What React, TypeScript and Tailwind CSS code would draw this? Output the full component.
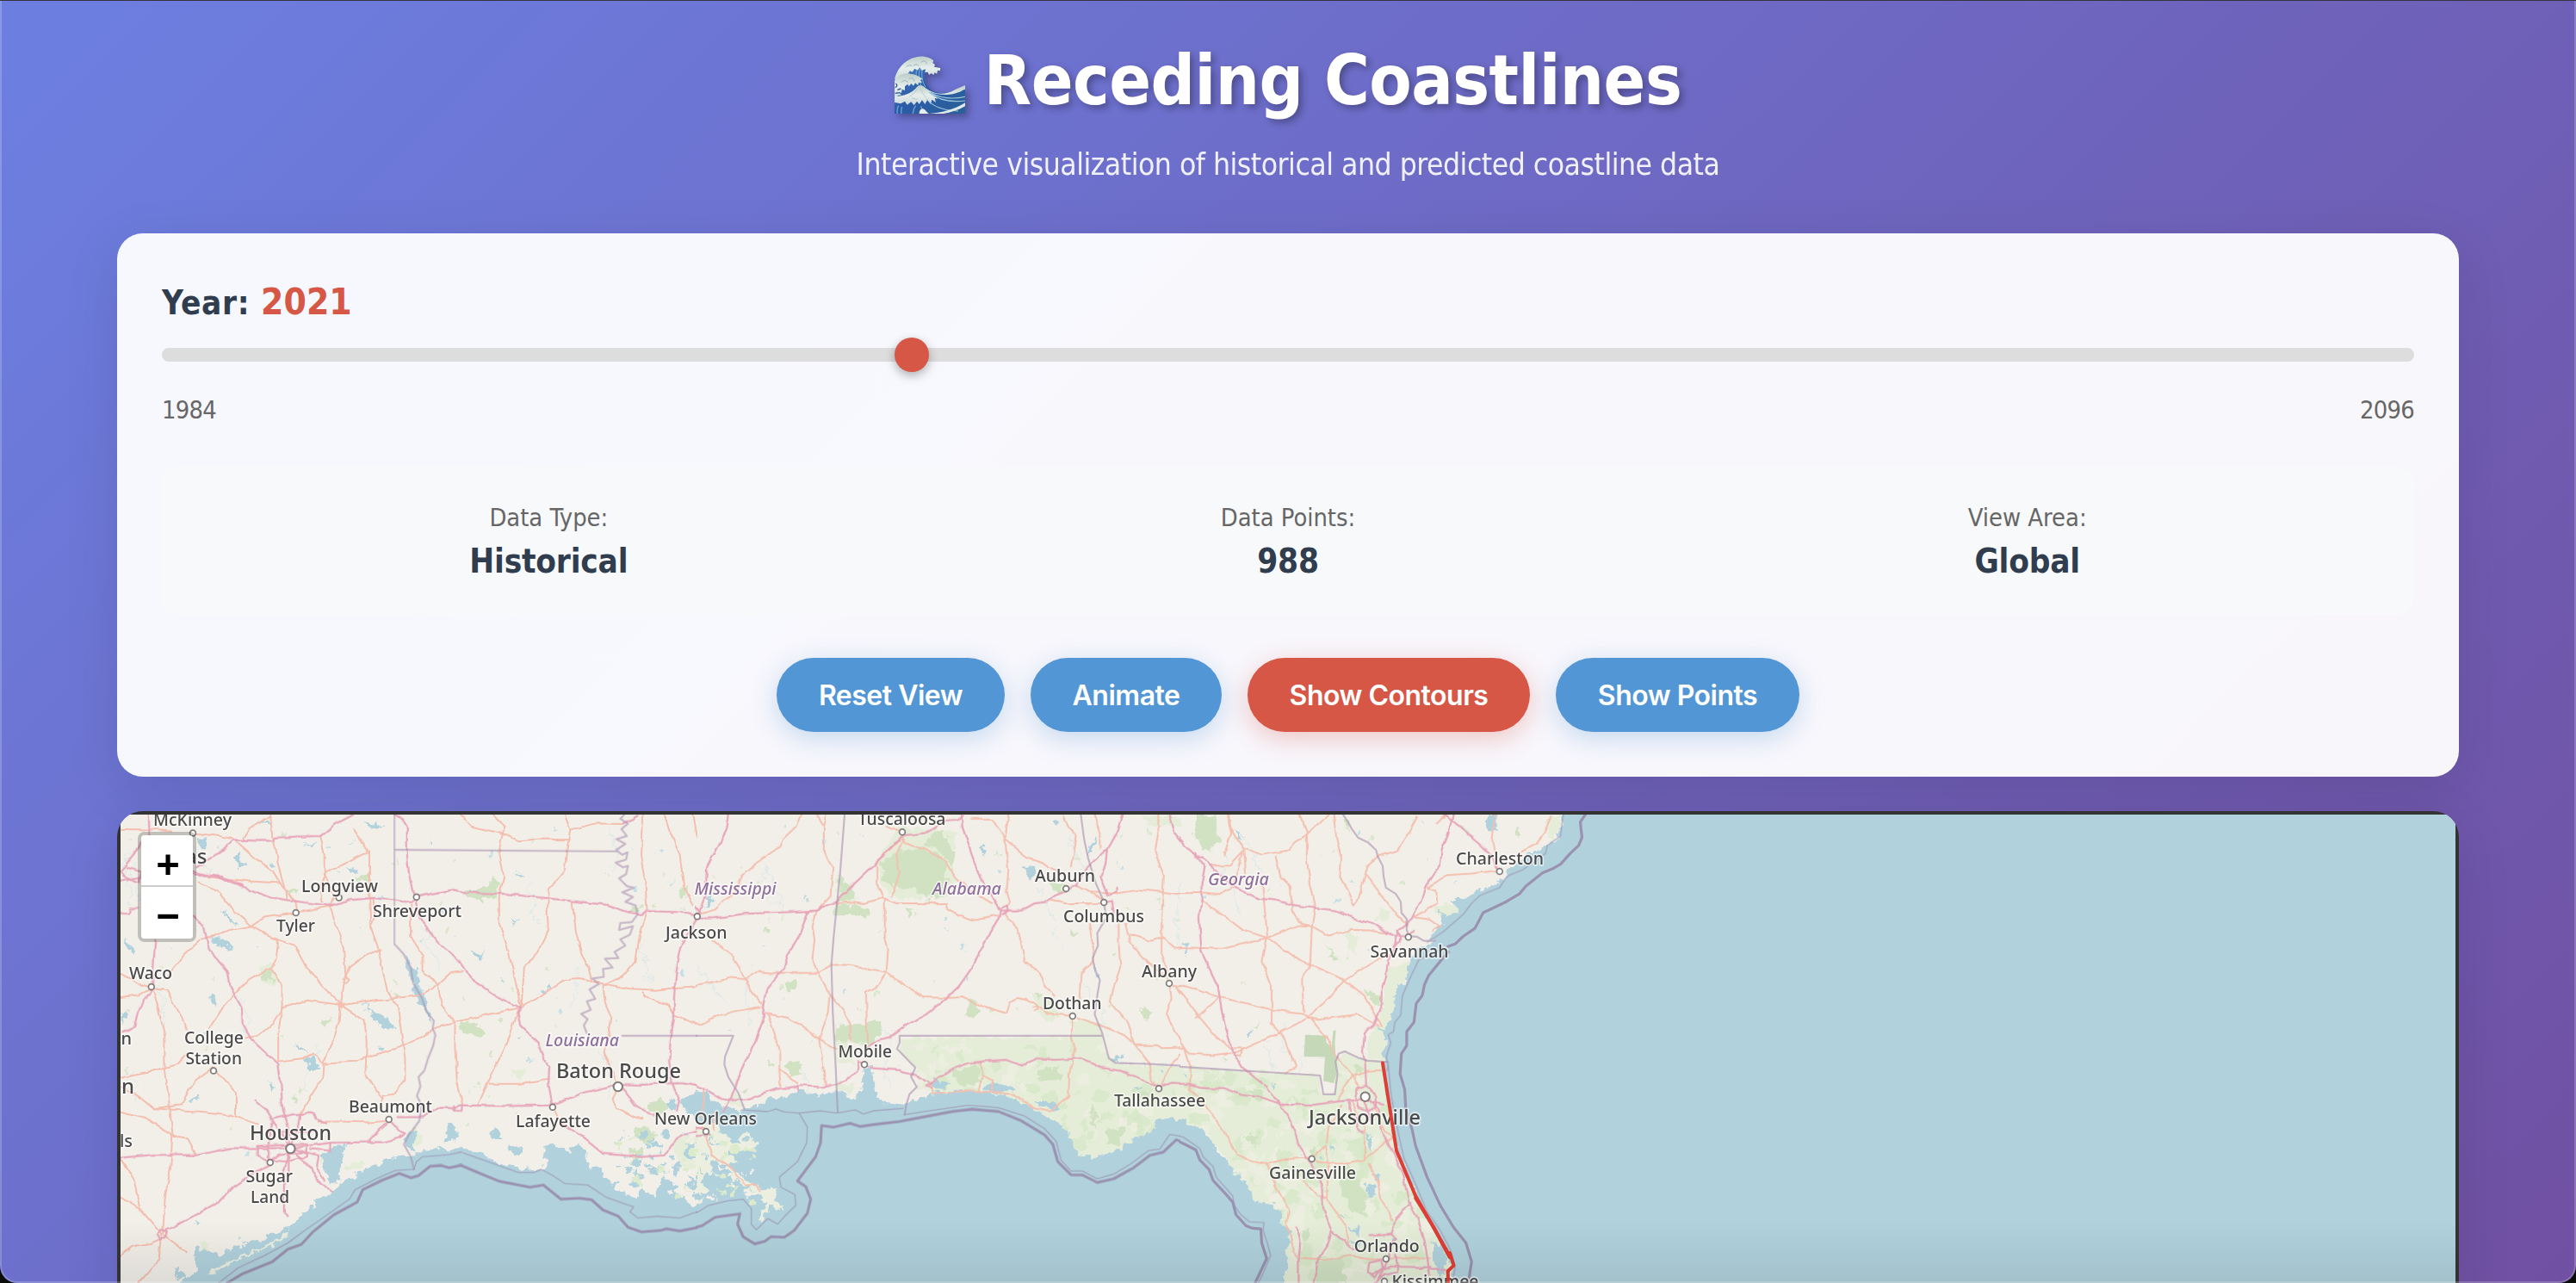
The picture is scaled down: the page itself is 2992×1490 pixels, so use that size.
import React from "react";

type Pt = string;

/* ---------- coast regions: each is traced on its own local grid ---------- */

const WEST = "translate(120 920) scale(0.44643 0.36352)";
const MID = "translate(800 920) scale(0.38265 0.36352)";
const EAST = "translate(1340 920) scale(0.38265 0.36352)";

type Region = {
  id: string;
  transform: string;
  water: Pt[];
  land?: Pt[];
  marsh?: Pt[];
  forest?: Pt[];
  lakes?: Pt[];
  park?: Pt[];
  border: Pt[];
  coastThin: Pt[];
  coastThick: Pt[];
  trunk: Pt[];
  motorway: Pt[];
};

const west: Region = {
  id: "west",
  transform: WEST,
  water: [
    "200,1568 235,1540 250,1520 235,1490 235,1450 270,1465 300,1480 330,1460 400,1430 480,1395 530,1335 560,1300 595,1275 640,1230 710,1190 760,1165 800,1160 830,1148 880,1138 950,1143 990,1160 1040,1190 1100,1205 1135,1200 1160,1190 1150,1160 1150,1130 1185,1125 1210,1145 1240,1120 1255,1140 1250,1180 1300,1215 1325,1250 1345,1240 1330,1270 1390,1300 1400,1260 1430,1290 1460,1230 1480,1245 1500,1290 1540,1320 1600,1300 1600,1680 120,1680",
    "570,1165 590,1140 600,1130 632,1122 620,1170 610,1215 620,1240 590,1250 575,1210",
    "780,1115 800,1080 816,1085 806,1125 812,1150 790,1140",
    "900,1055 912,1060 922,1110 905,1118 885,1115 895,1090",
    "1005,1085 1020,1075 1042,1110 1015,1112",
    "1050,1125 1090,1135 1085,1165 1055,1150",
    "1500,990 1530,965 1600,950 1600,1010 1540,1030 1510,1015",
    "1465,995 1480,970 1492,1010 1472,1022",
    "1515,1130 1535,1120 1550,1150 1530,1180 1510,1165",
    "1455,1080 1470,1085 1468,1110 1455,1100",
  ],
  land: ["270,1535 330,1498 420,1450 480,1410 484,1414 425,1456 335,1505 280,1540"],
  marsh: [
    "1170,1185 1195,1175 1225,1200 1215,1220 1185,1205",
    "630,1190 680,1180 670,1200 620,1215",
    "805,1090 830,1100 825,1130 808,1135",
    "1500,1100 1560,1100 1568,1150 1540,1200 1500,1190 1480,1130",
    "1060,885 1100,880 1090,915 1070,905",
    "410,570 440,540 450,620 415,610",
    "250,1440 275,1435 270,1470 255,1460",
  ],
  forest: [
    "925,740 950,735 990,750 995,775 965,782 930,760",
    "940,318 1000,298 1015,265 1035,300 1018,338 960,345",
    "568,735 590,720 590,738 572,742",
    "410,585 432,560 440,605 415,600",
    "1380,1070 1420,1075 1450,1100 1420,1125 1385,1110",
    "1415,1000 1450,975 1470,1000 1450,1040 1420,1020",
    "1370,1140 1400,1135 1410,1160 1380,1175",
    "480,310 510,308 500,325 482,325",
    "660,270 690,262 690,285 665,285",
    "750,630 765,640 760,660",
    "1495,310 1520,300 1515,335 1500,335",
    "1375,360 1400,365 1395,390 1380,385",
    "495,965 512,985 500,995",
    "1450,250 1465,255 1458,268",
    "1020,725 1035,720 1030,735",
  ],
  lakes: [
    "520,850 545,840 560,885 545,890",
    "680,670 700,710 730,715 750,730 762,760 735,755 710,735 690,700",
    "665,660 690,690 680,680",
    "782,515 800,540 820,590 830,640 842,690 855,730 840,715 825,670 808,640 800,590",
    "400,97 430,88 436,98 405,106",
    "515,165 540,170 560,155 545,178",
    "680,100 715,97 728,110 715,116 692,110",
    "340,210 350,195 360,230 380,235 350,240",
    "415,205 425,225 450,240 430,235",
    "630,235 660,250 650,260",
    "280,462 310,470 338,498 300,493 285,483",
    "310,370 330,400 350,430 325,410",
    "55,465 75,490 80,520 65,500",
    "960,510 980,520 990,495 985,530 970,528",
    "850,145 860,170 852,165",
    "1070,245 1085,265 1100,270 1080,275",
    "1135,640 1165,612 1160,625 1140,645",
    "275,645 292,655 290,680 280,665",
    "495,795 515,815 530,835 510,825",
    "430,920 445,940 440,965",
    "220,980 250,975 245,988 225,985",
    "245,150 270,150 262,180 250,170",
    "1060,405 1075,410 1068,420",
    "240,1365 250,1370 242,1390",
    "345,1420 355,1422 348,1432",
    "180,1510 205,1530 215,1560 195,1555",
    "1035,590 1042,615 1036,610",
    "45,705 60,715 52,745",
    "722,810 732,815 725,835",
    "1075,785 1090,780 1080,795",
    "1390,1215 1410,1225 1400,1240",
    "1425,1190 1440,1200 1430,1215",
    "1475,1195 1500,1205 1485,1225",
    "1520,1220 1540,1240 1525,1265",
  ],
  border: [
    "757,72 757,485 780,515 800,560 806,610 830,660 840,700 860,730 857,755 864,775 858,810 845,850 835,890 820,910 825,940 816,970 828,1000 822,1050 795,1095 782,1125 800,1165 808,1205",
    "757,184 1340,189",
    "1355,72 1345,85 1365,100 1348,118 1362,140 1335,150 1358,165 1334,185 1350,200 1364,192 1360,215 1333,225 1352,240 1365,235 1360,262 1342,275 1362,300 1380,305 1350,320 1378,335 1358,350 1385,362 1390,390 1375,415 1345,418 1342,440 1378,428 1370,455 1345,470 1358,490 1330,510 1340,530 1305,532 1325,560 1300,565 1302,590 1272,595 1290,612 1265,630 1280,660 1258,668 1268,695 1243,708 1260,725 1250,745 1258,770",
    "1350,778 1568,778",
  ],
  coastThin: [
    "300,1568 350,1520 420,1480 480,1440 530,1395 600,1335 640,1300 655,1270 710,1235 760,1208 808,1205 815,1180 830,1165 900,1158 930,1150 1000,1180 1080,1215 1120,1215 1140,1205 1170,1225 1200,1250 1260,1255 1310,1295 1380,1325 1370,1340 1390,1360 1440,1355 1500,1360 1568,1330",
  ],
  coastThick: [
    "322,1568 360,1540 440,1500 480,1460 515,1445 545,1405 600,1350 660,1310 675,1270 725,1240 770,1218 800,1232 820,1225 850,1195 880,1193 900,1200 930,1192 980,1218 1030,1243 1110,1262 1145,1255 1165,1275 1190,1300 1240,1297 1270,1302 1300,1335 1340,1355 1365,1390 1400,1405 1450,1400 1465,1395 1500,1402 1550,1390 1568,1375",
  ],
  trunk: [
    "45,118 130,120 175,125",
    "233,130 300,140 340,150 400,215 440,250 465,300 500,350 505,380",
    "435,72 440,150 455,230 465,280 480,340",
    "365,150 385,110 435,75",
    "565,140 575,200 575,260 600,330 590,365",
    "650,120 690,190 620,235 580,250 565,300 570,350",
    "692,190 692,300 695,430 715,500 725,560 740,640 765,680 772,740 785,850 785,920 755,965 730,970 722,995",
    "275,270 380,285 460,290",
    "250,290 300,320 340,380 385,428 430,460 500,490 530,560 570,620 620,680",
    "590,365 610,440 625,500 630,580 618,680 612,740 600,790 575,860 572,910 540,970 510,1035",
    "255,470 330,440 385,428 420,400 500,385 600,362",
    "455,470 450,530 435,560 465,620 465,690 455,770 455,860",
    "435,560 380,600 345,640 310,690 275,755",
    "250,475 210,520 165,590",
    "132,625 165,630 185,680 205,720 215,760",
    "130,630 145,700 160,780 160,870 170,980 180,1090 175,1200 160,1300 155,1410",
    "45,580 90,610 125,625",
    "45,655 90,648 125,627",
    "45,910 130,890 190,870 220,830",
    "45,940 90,970 130,1010 200,1000 240,920 285,880 345,960 345,1030",
    "45,1020 110,1040 180,1095 220,1110 240,1155",
    "45,1175 80,1240 95,1330 45,1290",
    "95,1330 150,1410 220,1470",
    "150,1410 145,1490 110,1540 90,1568",
    "45,1480 80,1450 130,1440 150,1425",
    "130,1010 250,1020 330,1030 400,1060",
    "465,690 530,665 620,680 700,665 820,650 870,615 905,575 935,570",
    "618,680 680,730 685,800 682,900 725,980",
    "455,860 520,850 545,835 575,865 660,860 685,845 760,820 830,780 880,745 915,735 1000,710 1080,690",
    "370,785 400,780 440,740 465,690",
    "800,360 800,460 830,520 830,570 870,615 880,680 915,735 915,820 920,920 935,1000",
    "630,590 640,560 680,520 720,503",
    "695,435 705,400 700,340",
    "1080,690 1130,660 1200,600 1240,597 1285,608",
    "1080,700 1050,800 1000,930 975,998",
    "1005,932 1080,932 1160,915",
    "1015,72 1045,110 1035,150 1030,190 1042,270 1030,330 1030,420 1050,490 1060,540 1075,620 1085,680",
    "930,72 960,110 1030,130 1080,155 1140,150 1208,152",
    "1200,72 1215,120 1205,190 1200,250 1160,310 1155,380 1158,440 1130,510 1095,560 1088,680",
    "1220,350 1225,400 1230,450 1245,520 1262,560 1270,600",
    "1215,120 1280,100 1350,102",
    "1405,72 1400,200 1408,260 1415,380 1395,460 1385,540 1350,590 1300,615 1305,670 1322,720 1315,780 1300,830 1320,880 1340,940",
    "1460,72 1475,130 1500,200 1510,300 1535,360",
    "1535,72 1545,140 1568,200",
    "1285,608 1370,628 1440,632 1485,625 1568,618",
    "1400,640 1410,655 1470,680 1485,710 1530,735 1568,740",
    "690,1055 745,1050",
    "560,1052 620,1052 690,1055",
    "1340,945 1325,980 1335,1010 1385,1042 1405,1040",
    "1170,1005 1185,1040 1210,1075",
    "624,595 632,588 640,600 632,610 624,605",
    "612,680 618,674 626,682 618,690 612,684",
  ],
  motorway: [
    "45,285 90,275 150,260 235,255 300,272 360,300 430,335 520,352 590,362 640,345 700,338 757,345 800,352 815,335 850,325 910,312 940,320 1050,325 1200,345 1310,360 1370,385 1400,390 1415,380 1500,383 1568,400",
    "60,240 100,255 90,290 55,270 45,250",
    "118,72 120,140",
    "45,250 80,200 95,160",
    "235,262 270,265 310,270 360,295",
    "240,240 300,195 340,152 400,155 440,155 445,145 500,142 565,140 600,105 650,72",
    "755,72 780,90 790,110 790,200 795,260 805,320 815,345",
    "812,345 820,400 870,480 930,545 960,600 1020,650 1085,688 1078,710 1085,745 1130,800 1145,850 1160,880 1158,930 1168,1000",
    "235,395 262,430 275,505 300,540 325,575 330,620 360,690 362,740 385,790 420,830 455,870 462,930 465,1000 480,1080 487,1135",
    "135,470 130,560 130,620 90,700 80,750 50,765",
    "45,385 65,385 70,372 92,372",
    "45,1168 130,1158 240,1160 330,1137 400,1137 487,1137 530,1130 590,1120 690,1118 720,1075 745,1050",
    "745,1050 775,1085 785,1090 770,1105 730,1118 690,1118",
    "765,1038 830,1038 870,1008 912,1010 930,1000 1050,1002 1165,1000 1250,960 1340,932 1400,935 1450,930 1510,930 1568,945",
    "912,1003 912,1015 935,1015 935,1003",
    "437,1190 400,1210 340,1260 305,1305 240,1350 180,1390 160,1400",
    "139,1410 150,1397 165,1405 160,1425 145,1428 139,1410",
    "402,1130 402,1160 425,1175 475,1180 530,1165 530,1125 400,1130",
    "440,1060 430,1100 430,1180 455,1160 520,1150",
    "395,985 420,1010 445,1060 470,1100 487,1137",
    "435,1045 490,1030 545,1025 552,1045 580,1055",
    "510,1035 505,1080 487,1137",
    "487,1137 540,1200 560,1245 595,1275",
    "487,1137 470,1200 470,1340 480,1357",
    "482,1140 482,1210",
    "487,1137 560,1160 555,1200 575,1240",
    "540,1140 590,1145 590,1120",
    "455,1085 545,1085",
    "1350,945 1385,1000 1410,1020 1430,1030",
    "1190,1060 1240,1095 1300,1155 1350,1160 1400,1165 1460,1160 1475,1130 1500,1100 1568,1075",
    "1545,400 1525,440 1512,475 1500,510 1490,580 1485,650 1485,720 1475,800 1472,860 1480,930 1498,985 1492,1020",
    "1545,395 1550,360 1568,330",
    "1350,100 1370,90 1390,75",
  ],
};

const mid: Region = {
  id: "mid",
  transform: MID,
  water: [
    "-40,965 0,955 50,965 80,990 105,1000 130,1010 160,1020 190,1008 240,985 290,970 330,955 380,965 445,960 500,975 522,965 528,890 545,875 560,890 568,960 590,990 640,1000 690,985 735,965 820,955 950,965 1010,990 1070,1025 1110,1050 1160,1100 1185,1160 1230,1168 1290,1150 1340,1115 1410,1085 1420,1045 1480,1040 1520,1060 1600,1110 1600,1680 -40,1680",
  ],
  land: [
    "-40,1070 0,1060 40,1050 90,1060 100,1090 150,1110 170,1080 190,1110 215,1120 150,1150 120,1160 150,1180 110,1190 170,1235 220,1270 270,1262 262,1300 288,1325 250,1325 215,1372 235,1310 190,1270 150,1250 110,1205 70,1180 70,1210 110,1235 60,1215 35,1240 60,1270 40,1310 10,1330 -40,1300",
  ],
  marsh: [
    "640,785 1255,785 1275,850 1295,868 1600,880 1600,1110 1520,1060 1480,1040 1420,1045 1410,1085 1340,1115 1290,1150 1230,1168 1185,1160 1160,1100 1110,1050 1070,1025 1010,990 950,965 820,955 735,965 690,940 688,880 640,830",
    "1160,720 1255,740 1255,785 1165,785",
    "440,745 580,735 560,800 480,800 510,870 450,860",
    "640,110 810,130 800,330 640,345 590,310 575,220",
    "450,260 520,340 450,355",
    "450,920 510,930 490,965 450,960",
    "110,990 150,960 165,1010",
    "1380,75 1480,80 1500,100 1400,110",
    "1090,280 1150,300 1140,320 1100,315",
    "1040,640 1110,670 1130,720 1080,730",
  ],
  forest: [
    "585,225 640,190 700,180 760,195 780,220 780,338 720,340 680,310 630,305 590,280",
    "710,160 770,120 785,150 810,190 800,230 760,190",
    "445,358 540,368 558,395 500,393 445,395",
    "460,270 500,310 508,340 455,350",
    "445,748 535,738 575,728 578,780 550,800 445,795",
    "855,650 880,690 895,705 860,722 838,718",
    "290,865 345,850 340,895 310,908",
    "295,605 325,600 322,630 300,635",
    "240,860 262,870 250,880",
    "1370,690 1405,705 1385,728",
    "1540,80 1590,90 1590,180 1540,150",
    "1155,442 1185,450 1170,460",
    "225,430 242,432 235,455",
    "1050,635 1078,650 1060,660",
    "1100,290 1140,285 1135,318 1100,310",
    "655,370 680,372 670,395",
    "795,890 880,870 885,930 820,935",
    "1270,1080 1320,1070 1310,1130 1270,1120",
    "1050,890 1120,880 1130,920 1060,920",
    "1215,990 1235,1020 1240,1080 1220,1060",
    "1340,950 1400,960 1380,990",
    "150,950 178,955 165,965",
    "930,185 945,190 938,203",
  ],
  lakes: [
    "740,905 760,925 800,928 770,950 742,945",
    "890,935 940,928 990,945 985,958 900,955",
    "1050,990 1110,990 1130,1020 1090,1015",
    "1015,240 1045,230 1060,265 1035,280",
    "890,160 898,170 903,205 893,195",
    "60,345 72,335 65,375 50,370",
    "1210,185 1235,140 1238,155 1215,210",
    "1225,540 1242,585 1240,600",
    "1275,850 1325,840 1295,862",
    "350,330 358,340 352,345",
    "1105,95 1120,90 1112,110",
    "1505,480 1515,525 1508,520",
    "1425,885 1445,885 1435,892",
    "1500,900 1508,905 1500,912",
    "100,1075 165,1070 160,1105 130,1100",
    "0,1110 25,1120 10,1150",
    "10,1215 30,1225 15,1260",
    "45,1150 60,1160 50,1175",
    "-10,1270 12,1280 0,1300",
    "1345,945 1370,935 1380,945",
  ],
  border: [
    "473,72 460,250 440,460 433,550 437,700 440,760 446,880 452,1022",
    "0,778 135,778 110,845 108,870 120,910 150,960 168,1010",
    "640,778 1255,778",
    "640,778 640,800 632,820 660,850 688,880 675,910 692,942 670,965 660,1000 655,1030",
    "1190,72 1200,150 1212,210 1235,290 1258,345 1268,400 1240,450 1242,490 1226,530 1232,565 1248,600 1240,650 1232,710 1255,770 1275,850 1295,865 1400,868 1568,878",
  ],
  coastThin: [
    "0,1350 30,1340 60,1320 120,1305 165,1300 190,1330 190,1380 205,1398 240,1362 270,1380 295,1350 325,1320 322,1285 280,1262 275,1230 330,1180 358,1120 360,1070 335,1025 400,1018 450,1025 505,1015 530,1028 560,1018 650,1010",
    "160,1015 240,1020 265,1012 290,1022 335,1025",
    "655,1030 750,1015 850,1000 940,1008 1020,1035 1080,1075 1115,1115 1130,1175 1160,1210 1195,1210 1240,1235 1290,1220 1345,1185 1395,1145 1430,1140 1460,1093 1500,1100 1545,1125 1568,1165",
  ],
  coastThick: [
    "0,1397 40,1385 80,1358 155,1347 148,1380 165,1420 200,1443 230,1435 250,1420 290,1422 320,1400 360,1345 370,1300 355,1260 330,1242 385,1165 400,1120 403,1065 440,1070 490,1058 520,1068 560,1062 640,1052 700,1040 800,1020 860,1013 940,1020 1010,1050 1080,1095 1105,1125 1120,1180 1160,1222 1195,1223 1240,1247 1290,1235 1350,1200 1400,1160 1440,1150 1480,1110 1540,1140 1568,1195",
  ],
  trunk: [
    "340,72 325,110 285,150 275,175 200,230 160,270 145,310 80,375 30,390",
    "388,72 410,110 410,190 437,240 430,330 390,375 375,430 382,470 375,530 400,590 430,650 425,700 395,790 445,820",
    "420,72 410,110",
    "650,140 600,195 570,220 570,290 590,340",
    "650,150 630,200 640,260 615,335",
    "600,110 645,130 655,160 720,185 780,220 810,270 850,310 920,355",
    "450,355 500,350 530,355 590,338 630,355 780,355 785,375 820,395 860,410 940,395",
    "595,340 595,460 605,500 600,575 572,620 538,640 540,720 540,800",
    "0,620 80,605 130,590 170,595 215,573 260,577 390,577 430,552 490,552 530,560 600,575 650,615 715,655 780,658 830,655 900,685 965,707 975,670 1000,657 1045,670 1090,705 1160,715",
    "75,475 130,520 165,580 190,635 225,680",
    "0,738 40,740 80,718 140,700 220,685",
    "235,708 300,720 350,750 395,792 405,850 415,940",
    "240,710 260,770 275,830 275,890 278,940",
    "275,885 330,930",
    "430,650 470,700 490,740 490,795",
    "960,390 1000,440 1020,540 1060,570 1080,620 1110,650",
    "970,72 960,150 970,250 965,320 975,350 955,390",
    "860,85 920,85 960,150 1030,210 1080,230 1130,260",
    "1135,72 1145,100 1175,135 1160,240",
    "1100,345 1140,355 1250,355",
    "1175,300 1220,320 1258,345",
    "1230,72 1250,130 1250,180",
    "1425,72 1425,130 1415,190 1442,270 1435,400 1435,510 1455,580",
    "1290,325 1370,312 1430,318 1480,325 1568,312",
    "1215,420 1230,510 1225,545 1190,580 1185,660",
    "1165,720 1162,780 1172,820 1155,900 1153,970 1095,1020 1050,1010 1020,990 990,965 840,952 800,958 740,962 730,930",
    "1180,720 1250,745 1320,775 1358,810 1400,870 1405,920 1425,945",
    "1305,420 1305,480 1310,560 1290,620 1280,670 1330,735 1355,808 1420,808 1440,818 1500,815 1568,835",
    "1325,420 1340,480 1380,530 1410,560 1455,595",
    "1340,455 1400,475 1440,465 1475,497 1555,497",
    "1460,615 1465,660 1450,710 1480,770 1505,820 1465,870 1430,940",
    "1470,615 1510,625 1568,640",
    "1480,620 1520,690 1550,720 1510,800",
    "1505,820 1520,870 1520,950 1545,960",
    "885,865 892,900 880,950",
    "892,905 920,920 920,955",
    "1555,500 1520,515 1490,580",
    "50,1095 60,1130 70,1160 120,1195 160,1235 175,1255 205,1255 215,1275",
    "45,955 40,1040",
    "0,1070 50,1075",
    "75,1020 78,1080",
    "1225,320 1300,325",
    "1045,685 1055,680 1060,692 1050,697",
  ],
  motorway: [
    "122,72 115,120 85,180 55,240 50,330 28,395",
    "0,405 80,402 170,388 260,385 360,380 390,378 400,368 450,350 490,305 560,235 600,190 650,138 720,130 745,115 780,90 810,88 835,75",
    "828,72 830,110 850,170 870,230 900,300 945,378 1010,378 1050,355 1090,350 1120,325 1175,298 1210,240 1270,180 1300,125 1315,72",
    "945,378 942,400 915,445 890,500 860,560 820,620 780,660 720,710 660,745 610,785 570,795 540,815",
    "362,385 335,460 300,520 290,560 235,630 225,690 230,715 200,800 165,880 145,930 128,980 105,1020",
    "355,383 390,378",
    "0,932 60,955 100,980 130,985 180,980 270,948 340,938 400,942 450,935 490,910 515,885 515,860 535,868 560,882 640,888 690,905 735,930 800,885 850,865 890,860 960,855 1010,872 1060,850 1110,855 1190,850 1250,880 1310,890 1390,925 1430,940 1470,928 1568,938",
    "1270,180 1265,230 1250,270 1270,330 1300,320 1300,305",
    "1258,350 1285,345 1290,390",
    "1460,72 1475,130 1500,165 1550,205 1568,210",
    "1555,230 1560,330 1550,400 1555,510",
    "945,370 965,362 970,378 950,390",
    "0,1070 40,1073 60,1095 0,1100",
    "20,365 35,385 0,395",
    "735,930 720,940 735,945",
    "330,938 332,955",
  ],
};

const east: Region = {
  id: "east",
  transform: EAST,
  water: [
    "-40,1050 0,1040 90,1045 150,1080 185,1130 190,1150 230,1190 240,1215 270,1230 290,1270 310,1310 360,1315 385,1350 385,1375 412,1400 405,1480 398,1530 385,1680 -40,1680",
    "1240,40 1245,72 1235,110 1230,140 1200,165 1160,190 1140,185 1120,220 1075,240 1070,270 1020,305 965,320 950,340 905,345 925,375 890,400 870,375 875,420 850,445 830,470 860,478 800,500 785,540 770,560 760,600 730,650 735,690 712,730 700,760 680,750 705,790 695,860 705,960 720,1040 735,1140 780,1250 815,1320 850,1400 880,1450 905,1500 905,1680 2700,1680 2700,40",
  ],
  marsh: [
    "-20,875 505,905 510,965 552,965 553,860 575,830 640,855 690,862 705,960 720,1040 735,1140 780,1250 815,1320 850,1400 880,1450 905,1500 905,1680 385,1680 405,1480 412,1400 385,1350 360,1315 310,1310 290,1270 240,1215 230,1190 185,1130 150,1080 90,1045 -20,1040",
    "640,800 680,740 700,640 715,560 760,545 785,540 730,650 735,690 700,780 705,860 650,850",
    "850,370 880,350 930,370 900,400 870,400",
    "680,370 720,380 700,420 680,410",
    "520,480 570,540 545,530",
    "1190,80 1240,72 1230,130 1200,150",
    "590,440 620,460 610,520 590,500",
  ],
  forest: [
    "125,72 190,72 192,130 205,150 165,192 125,150",
    "645,625 690,660 680,685 650,650",
    "1095,115 1110,120 1110,145 1090,135",
    "300,760 318,730 315,755",
    "205,850 220,850 215,862",
    "570,85 600,90 590,115",
    "445,1400 475,1400 470,1435 450,1435",
    "570,1190 620,1220 650,1300 640,1350 600,1340 570,1280",
    "490,1500 570,1490 590,1568 500,1568",
    "270,1100 320,1090 310,1130",
    "600,870 640,880 620,910",
    "280,950 340,960 320,990",
    "470,1150 490,1130 490,1165",
    "530,490 560,535 545,540",
    "930,100 965,135 950,130",
  ],
  park: [
    "460,775 522,778 524,800 540,815 545,762 553,760 550,800 555,900 545,930 515,922 520,846 456,845",
  ],
  lakes: [
    "1000,92 1018,72 1038,75 1040,122 1018,122",
    "640,1255 665,1255 672,1285 655,1302",
    "645,1080 655,1095 665,1150 655,1140",
    "665,1205 690,1235 680,1240",
    "845,1430 870,1450 890,1500 870,1530 850,1490",
    "280,770 300,765 290,785",
    "90,480 100,480 100,525",
    "85,900 98,905 90,915",
    "500,1165 512,1165 505,1178",
    "535,1120 545,1145 538,1145",
    "590,1385 610,1400 625,1385 620,1410 595,1405",
    "570,1350 580,1350 575,1362",
    "600,1440 630,1435 620,1450",
    "725,1430 745,1420 735,1440",
    "865,1500 885,1530 870,1560 860,1530",
    "240,115 275,145 255,140",
    "15,885 35,885 25,892",
    "360,930 370,940 365,948",
  ],
  border: [
    "575,72 590,95 600,115 620,145 650,160 675,185 680,205 695,235 698,270 705,305 735,325 750,350 752,385 768,405 768,440 775,460 800,462 820,475 855,475",
    "0,872 250,888 505,905 512,945 515,965 550,965 558,900 552,860 562,835 580,828 620,848 650,858 710,862",
  ],
  coastThin: [
    "1243,72 1235,140 1195,170 1190,195 1120,248 1080,265 1068,275 1050,305 990,330 965,355 940,390 880,445 830,480",
    "865,505 805,535 780,590 755,650 750,712 732,735 728,765 712,775 720,800 706,845 712,870 708,890",
    "712,870 720,960 735,1050 745,1100 760,1170 790,1240 830,1340 870,1400 900,1460 915,1520 905,1568",
    "0,1145 30,1130 50,1093 90,1102 140,1138 150,1165 180,1195 190,1230 240,1290 245,1320 265,1350 290,1372 335,1375 332,1400 345,1440 355,1480 335,1530 318,1568",
  ],
  coastThick: [
    "1310,72 1295,95 1300,145 1290,170 1265,195 1235,230 1210,245 1180,258 1130,300 1110,325 1070,350 1040,365 1000,385 975,435 940,460 915,485 893,493",
    "895,510 870,540 835,585 822,615 815,650 797,675 790,735 768,765 768,810 752,835 748,900 762,950 765,1010 785,1080 795,1130 830,1230 870,1320 910,1390 948,1440 965,1500 955,1568",
    "0,1158 25,1150 65,1110 95,1125 128,1143 140,1175 168,1205 180,1240 220,1285 240,1310 250,1350 280,1385 300,1393 325,1395 328,1440 343,1490 325,1530 308,1568",
  ],
  trunk: [
    "12,72 5,200 30,270 15,360 20,500 50,600",
    "0,322 140,322 200,328 240,300 270,190 230,235 180,235",
    "225,72 230,110 255,150 275,185 280,265",
    "215,200 235,130 230,90",
    "275,180 330,200 410,185 430,160 465,135 500,100 530,72",
    "445,72 465,130 465,220 475,290 490,360 480,430 475,550 450,600 455,700",
    "545,72 555,150 570,210 565,270 590,320 608,362 620,345 640,270 650,235 680,205 740,185 775,130 800,75",
    "645,265 700,340 740,395 770,425",
    "370,205 385,270 415,300 420,380 450,420 480,428 530,458 600,440 655,442 710,450",
    "330,300 345,460 330,540 358,620 358,740 400,790 430,880 400,895",
    "145,345 220,400 270,440 345,465 440,535 580,600 640,650 690,745",
    "65,495 210,500 345,465 440,425 480,428",
    "470,715 520,670 580,600 670,540 715,520",
    "50,610 130,632 200,655 360,695 450,705 470,720 500,727 560,718 620,710 680,745",
    "470,720 380,770 250,830 180,840 110,835 95,820 0,812",
    "50,620 40,710 75,790 95,820 112,880 110,950",
    "130,720 195,660",
    "60,610 105,670 140,720 180,770 240,825",
    "480,725 530,790 545,830 600,900 625,950",
    "1035,72 1028,160 1045,245",
    "1050,250 960,260 890,265 830,305 858,312 860,355 815,385 790,400",
    "790,400 830,405 870,430 850,440",
    "1205,80 1185,130 1160,165 1100,200",
    "110,950 165,1010 220,1095 250,1155 300,1180 340,1188 400,1172 470,1168 500,1182 560,1187 640,1175 680,1140 725,1105",
    "345,1190 370,1260 410,1330 405,1380 430,1480 440,1490 520,1495 600,1480 640,1490 720,1490 840,1490",
    "560,988 575,950 600,905 650,890 690,888",
    "525,1120 530,1070 570,1000",
    "480,1170 520,1130 530,1200 525,1300",
    "640,1170 640,1070 600,985",
    "655,1190 680,1240 690,1300 715,1340 722,1370",
    "455,1240 500,1290 525,1300 580,1380 590,1440",
    "670,1010 700,1080 730,1110 720,1105",
    "885,72 860,100",
    "245,815 265,815 262,845 245,840",
  ],
  motorway: [
    "48,72 65,120 90,165 130,205 155,240 145,290 145,345 138,400 145,510 195,620 205,690 220,760 240,830 270,880 340,940 385,1000 410,1040 430,1090 440,1130 480,1190 510,1260 515,1330 540,1400 530,1440 500,1490 485,1568",
    "125,205 150,205 185,248 245,305 320,340 370,345 420,360 490,370 555,378 620,408 680,425 710,450 735,460 770,460",
    "908,72 895,130 875,180 870,230 825,300 810,350 780,410 740,440 735,490 710,540 705,590 692,640 690,695 670,740 640,770 635,830 642,870 645,940",
    "885,72 940,120 990,165 1020,195 1045,245",
    "385,998 490,998 560,988 620,983 700,998",
    "645,975 670,1000 680,1010 690,1080 715,1130 735,1170 755,1220 775,1310 800,1360 822,1430 838,1540",
    "642,938 620,945 612,975 620,1005 650,1018 675,1005 672,965 655,942 642,938",
    "590,985 600,1020 620,1040 620,1075 635,1085",
    "640,985 655,1050",
    "0,930 110,932 140,942 210,945 270,968 330,975 385,998",
    "780,1312 735,1365 722,1410 735,1425 715,1450 715,1490 680,1560",
    "540,1400 580,1435 600,1455 620,1460",
    "435,1390 445,1430 440,1500 440,1568",
    "655,1500 690,1492 695,1520 670,1550 650,1530 655,1500",
    "655,1415 720,1410",
    "660,1540 690,1530 720,1515 840,1518",
    "670,1568 700,1540 740,1530 735,1480",
    "840,1525 890,1527",
    "735,440 750,460 750,480 730,490",
    "770,462 790,440",
  ],
};

/* ---------- small deterministic scatter for streams and tree cover ---------- */

function rng(seed: number) {
  let s = seed;
  return () => {
    s = (s * 16807) % 2147483647;
    return s / 2147483647;
  };
}

const streams: string[] = [];
const specks: { x: number; y: number; r: number; c: string }[] = [];
const groves: { x: number; y: number; rx: number; ry: number; c: string }[] = [];
const delta: { x: number; y: number; rx: number; ry: number; c: string }[] = [];
(() => {
  const r = rng(77);
  for (let i = 0; i < 34; i++) {
    let x = 150 + r() * 1500;
    let y = 950 + r() * 300;
    let d = `M${x.toFixed(0)} ${y.toFixed(0)}`;
    for (let k = 0; k < 9; k++) {
      x += (r() - 0.4) * 12;
      y += r() * 12;
      d += `L${x.toFixed(0)} ${y.toFixed(0)}`;
    }
    streams.push(d);
  }
  for (let i = 0; i < 200; i++) {
    specks.push({
      x: 145 + r() * 1560,
      y: 950 + r() * 400,
      r: 0.8 + r() * 1.4,
      c: r() > 0.6 ? "#c5dfe6" : "#dae7cc",
    });
  }
  for (let i = 0; i < 90; i++) {
    groves.push({
      x: 1060 + r() * 280,
      y: 1215 + r() * 120,
      rx: 2 + r() * 9,
      ry: 2 + r() * 7,
      c: r() > 0.5 ? "#d6e7c6" : "#eff0e2",
    });
  }
  for (let i = 0; i < 190; i++) {
    const y = 1245 + r() * 240;
    groves.push({
      x: 1350 + (y - 1245) * 0.5 + r() * 250,
      y,
      rx: 2 + r() * 11,
      ry: 2 + r() * 9,
      c: r() > 0.5 ? "#d6e7c6" : "#eff0e2",
    });
  }
  const tints = ["#b1d2dd", "#dcebcb", "#f2efe9", "#b1d2dd"];
  for (let i = 0; i < 150; i++) {
    const x = 715 + r() * 160;
    delta.push({
      x,
      y: 1318 + r() * (60 + (x - 715) * 0.15),
      rx: 1 + r() * 4.5,
      ry: 1 + r() * 3.5,
      c: tints[Math.floor(r() * 4)],
    });
  }
})();

const regions = [west, mid, east];

function Polys({ pts, fill }: { pts?: Pt[]; fill: string }) {
  return (
    <>
      {(pts ?? []).map((p, i) => (
        <polygon key={i} points={p} fill={fill} />
      ))}
    </>
  );
}

function Lines({ pts, stroke, width, opacity = 1 }: { pts: Pt[]; stroke: string; width: number; opacity?: number }) {
  return (
    <g fill="none" stroke={stroke} strokeWidth={width} strokeLinejoin="round" strokeLinecap="round" opacity={opacity}>
      {pts.map((p, i) => (
        <polyline key={i} points={p} vectorEffect="non-scaling-stroke" />
      ))}
    </g>
  );
}

function Layer({ id, render }: { id: string; render: (r: Region) => React.ReactNode }) {
  return (
    <>
      {regions.map((r) => (
        <g key={r.id} clipPath={`url(#clip-${r.id})`}>
          <g transform={r.transform} data-layer={id}>
            {render(r)}
          </g>
        </g>
      ))}
    </>
  );
}

type Town = { name: string; x: number; w: number; y: number; big?: boolean };

const towns: Town[] = [
  { name: "McKinney", x: 178, w: 91, y: 959 },
  { name: "Longview", x: 350, w: 89, y: 1035.5 },
  { name: "Tyler", x: 321, w: 45, y: 1082 },
  { name: "Shreveport", x: 433, w: 103, y: 1065 },
  { name: "Waco", x: 150, w: 50, y: 1137 },
  { name: "College", x: 214, w: 69, y: 1212 },
  { name: "Station", x: 215.5, w: 65.5, y: 1236 },
  { name: "Beaumont", x: 405, w: 97, y: 1292 },
  { name: "Houston", x: 290, w: 95, y: 1323.5, big: true },
  { name: "Sugar", x: 285.6, w: 54.5, y: 1372.5 },
  { name: "Land", x: 291, w: 45, y: 1396.5 },
  { name: "Lafayette", x: 599, w: 87, y: 1309 },
  { name: "Baton Rouge", x: 646, w: 145, y: 1251.5, big: true },
  { name: "Jackson", x: 773, w: 71.5, y: 1090 },
  { name: "New Orleans", x: 760, w: 119, y: 1305.5 },
  { name: "Tuscaloosa", x: 996.5, w: 102, y: 958 },
  { name: "Auburn", x: 1202, w: 70, y: 1023.5 },
  { name: "Columbus", x: 1235, w: 94, y: 1070.5 },
  { name: "Albany", x: 1326, w: 64, y: 1134.5 },
  { name: "Dothan", x: 1211, w: 68.5, y: 1171.5 },
  { name: "Mobile", x: 973.5, w: 62.5, y: 1228 },
  { name: "Tallahassee", x: 1294, w: 106, y: 1285 },
  { name: "Charleston", x: 1691, w: 102, y: 1004 },
  { name: "Savannah", x: 1591.5, w: 91, y: 1111.5 },
  { name: "Jacksonville", x: 1520, w: 130, y: 1305.5, big: true },
  { name: "Gainesville", x: 1474, w: 101, y: 1369 },
  { name: "Orlando", x: 1572.7, w: 76, y: 1453.5 },
  { name: "Kissimmee", x: 1616.5, w: 101, y: 1495 },
];

const states: Town[] = [
  { name: "Louisiana", x: 633.5, w: 85.5, y: 1215 },
  { name: "Mississippi", x: 806.5, w: 95, y: 1039 },
  { name: "Alabama", x: 1083, w: 80, y: 1038.5 },
  { name: "Georgia", x: 1403, w: 71, y: 1028 },
];

const cutLabels = [
  { name: "as", x: 240.5, y: 1003, size: 24 },
  { name: "en", x: 153, y: 1213, size: 20 },
  { name: "in", x: 156, y: 1270, size: 24 },
  { name: "ls", x: 154, y: 1331.5, size: 20 },
];

const markers: [number, number, number][] = [
  [224, 967.5, 3.4], [393.7, 1042.5, 3.4], [343.7, 1060, 3.4], [483.8, 1041.8, 3.4], [175.8, 1146, 3.4],
  [248, 1243.5, 3.4], [451.7, 1300, 3.4], [313.8, 1350, 3.4], [641.9, 1285.7, 3.4], [809.8, 1064.3, 3.4],
  [337.4, 1334, 5.2], [717.8, 1262, 5.2], [1048, 966.2, 3.4], [1238.2, 1032, 3.4], [1282.2, 1048, 3.4],
  [1358, 1142, 3.4], [1245.8, 1180, 3.4], [1004, 1236.3, 3.4], [1346, 1264.2, 3.4], [820, 1314, 3.4],
  [1741.8, 1012, 3.4], [1635.8, 1088.3, 3.4], [1585.7, 1273.7, 5.2], [1523.7, 1345.7, 3.4], [1609.8, 1462, 3.4],
  [1608, 1488, 3.4],
];

function CoastMap() {
  return (
    <svg className="block h-full w-full" viewBox="140 946 2712 544" preserveAspectRatio="xMinYMin slice">
      <defs>
        <clipPath id="clip-west"><rect x="80" y="900" width="730" height="640" /></clipPath>
        <clipPath id="clip-mid"><rect x="808" y="900" width="563" height="640" /></clipPath>
        <clipPath id="clip-east"><rect x="1370" y="900" width="1500" height="640" /></clipPath>
        <filter id="rough" filterUnits="userSpaceOnUse" x="100" y="910" width="1860" height="620">
          <feTurbulence type="fractalNoise" baseFrequency="0.11" numOctaves="3" seed="4" result="n" />
          <feDisplacementMap in="SourceGraphic" in2="n" scale="13" xChannelSelector="R" yChannelSelector="G" />
        </filter>
        <filter id="wander" filterUnits="userSpaceOnUse" x="100" y="910" width="1860" height="620">
          <feTurbulence type="fractalNoise" baseFrequency="0.07" numOctaves="2" seed="9" result="n" />
          <feDisplacementMap in="SourceGraphic" in2="n" scale="5" xChannelSelector="R" yChannelSelector="G" />
        </filter>
      </defs>
      <rect x="100" y="900" width="2800" height="640" fill="#f2efe9" />
      <g filter="url(#rough)">
        <rect x="80" y="900" width="2800" height="640" fill="#f2efe9" />
        <g fill="none" stroke="#dfe9e8" strokeWidth="1.3">
          {streams.map((d, i) => (
            <path key={i} d={d} />
          ))}
        </g>
        {specks.map((s, i) => (
          <ellipse key={i} cx={s.x} cy={s.y} rx={s.r} ry={s.r * 1.3} fill={s.c} />
        ))}
        <Layer id="marsh" render={(r) => <Polys pts={r.marsh} fill="#e5edd8" />} />
        {groves.map((g, i) => (
          <ellipse key={i} cx={g.x} cy={g.y} rx={g.rx} ry={g.ry} fill={g.c} opacity="0.7" />
        ))}
        <Layer id="forest" render={(r) => <Polys pts={r.forest} fill="#d1e2c3" />} />
        <Layer id="water" render={(r) => <Polys pts={r.water} fill="#b1d2dd" />} />
        <Layer id="delta" render={(r) => <Polys pts={r.land} fill="#ecefe0" />} />
        {delta.map((g, i) => (
          <ellipse key={i} cx={g.x} cy={g.y} rx={g.rx} ry={g.ry} fill={g.c} />
        ))}
        <Layer id="lakes" render={(r) => <Polys pts={r.lakes} fill="#b1d2dd" />} />
      </g>
      <rect x="1900" y="940" width="960" height="560" fill="#b1d2dd" />
      <Layer id="park" render={(r) => <Polys pts={r.park} fill="#c5d9b9" />} />
      <g filter="url(#wander)">
        <Layer id="trunk" render={(r) => <Lines pts={r.trunk} stroke="#f4bfae" width={2} />} />
        <Layer id="motorway" render={(r) => <Lines pts={r.motorway} stroke="#e7a5b9" width={2.2} />} />
      </g>
      <Layer id="border" render={(r) => <Lines pts={r.border} stroke="#a890b0" width={2.2} opacity={0.6} />} />
      <Layer id="thin" render={(r) => <Lines pts={r.coastThin} stroke="#9d93b3" width={1.3} opacity={0.75} />} />
      <Layer id="thick" render={(r) => <Lines pts={r.coastThick} stroke="#9a92b0" width={3.2} />} />

      {markers.map(([x, y, r], i) => (
        <circle key={i} cx={x} cy={y} r={r} fill="#ffffff" stroke="#807d7a" strokeWidth={r > 4 ? 2 : 1.7} />
      ))}
      <g
        fontFamily='"Noto Sans", sans-serif'
        fontWeight="500"
        fill="#4a4a4a"
        stroke="#ffffff"
        strokeOpacity="0.6"
        strokeWidth="3.5"
        strokeLinejoin="round"
        paintOrder="stroke"
      >
        {towns.map((t) => (
          <text key={t.name} x={t.x} y={t.y} fontSize={t.big ? 24 : 20.5} textLength={t.w} lengthAdjust="spacingAndGlyphs">
            {t.name}
          </text>
        ))}
        {cutLabels.map((t) => (
          <text key={t.name} x={t.x} y={t.y} fontSize={t.size} textAnchor="end">
            {t.name}
          </text>
        ))}
        <g fill="#8f6f9c" fontStyle="italic">
          {states.map((t) => (
            <text key={t.name} x={t.x} y={t.y} fontSize="20.5" textLength={t.w} lengthAdjust="spacingAndGlyphs">
              {t.name}
            </text>
          ))}
        </g>
      </g>
      <g transform={EAST}>
        <polyline
          points="695,865 737,1145 795,1290 898,1480"
          fill="none"
          stroke="#dd3f35"
          strokeWidth="4"
          strokeLinecap="round"
          strokeLinejoin="round"
          vectorEffect="non-scaling-stroke"
        />
        <polyline
          points="795,1297 850,1390 898,1486 899,1472 911,1512 893,1530 894,1580"
          fill="none"
          stroke="#dd3f35"
          strokeWidth="4"
          strokeLinecap="round"
          strokeLinejoin="round"
          vectorEffect="non-scaling-stroke"
        />
      </g>
    </svg>
  );
}

function Wave() {
  return (
    <svg
      className="mt-[8px] h-[67px] w-[82px] drop-shadow-[4px_4px_4px_rgba(0,0,0,0.3)]"
      viewBox="0 0 246 201"
      preserveAspectRatio="none"
    >
      <defs>
        <linearGradient id="sea" x1="0" y1="0" x2="1" y2="1">
          <stop offset="0" stopColor="#4f86c4" />
          <stop offset="0.5" stopColor="#2a5ba8" />
          <stop offset="1" stopColor="#2a6196" />
        </linearGradient>
        <linearGradient id="foam" x1="0" y1="0" x2="0" y2="1">
          <stop offset="0" stopColor="#bccdc9" />
          <stop offset="0.5" stopColor="#e6eeeb" />
          <stop offset="1" stopColor="#c8d8da" />
        </linearGradient>
      </defs>
      <path d="M0 201V80C10 40 40 8 84 3c24-3 40 6 48 14l-22 26c-10 30-6 52 14 74 30 22 80 12 122-14v98z" fill="url(#sea)" />
      <path d="M88 44c-4 24-4 42 4 58M98 42c-6 24-2 48 10 66M76 50c-2 18 0 34 4 48" stroke="#7fb0dc" strokeWidth="3" fill="none" />
      <path
        d="M0 82C8 44 38 8 84 2c24-3 44 6 52 14l-3 8 8 6-3 8 22 4-2 10-8-2-2 12-8-4-4 8-8-6-8 6-4-10-10 2 2-12-14 4-6-10-8 10-10-6-8 12-8-4-8 10-6 10-12 6z"
        fill="url(#foam)"
      />
      <path
        d="M0 86c10-20 34-28 56-24 18 2 32 10 42 18l-8 4 6 10-12-2-2 10-10-8-6 10-8-8-8 10-4-8-10 8 0 14-10-4-2 12-10-2 10 10-14 2 8 12-18 2z"
        fill="url(#foam)"
      />
      <path d="M24 92c8-10 20-8 22 2M50 80c8-6 18-2 18 8M92 22c8-8 20-4 20 6M40 40c6-8 16-10 22-4M66 34c8-8 18-4 18 2" stroke="#9db4ba" strokeWidth="3" fill="none" />
      <path d="M4 96c8 4 4 12-2 14M10 118l12-4M2 130l16-2" stroke="#2b5590" strokeWidth="4" fill="none" />
      <path
        d="M0 142c30-2 60-10 80-36 10-8 20-2 28 6 36 26 70 24 102 6 16-8 26-12 36-16v14c-10 2-14 8-22 10-30 14-70 10-100 0 10 8 20 12 26 24l-10-4 4 16-14-10-4 16-12-14-8 14-10-14-10 14-8-10-10 14-10-12-14 10-8-12-14 8-22-4z"
        fill="url(#foam)"
      />
      <path d="M120 126c30 28 70 36 126 30M130 130c26 16 70 22 116 12M112 150c24 30 60 40 110 42" stroke="#9cc4dc" strokeWidth="3.5" fill="none" />
      <path d="M120 201c40-2 90-14 126-38v12c-24 14-50 22-76 26z" fill="#dfe9ea" />
      <path d="M10 201c-2-12 0-20 4-28M24 201c-2-10 0-18 2-24M64 201c0-12 4-20 10-28M96 201c2-10-2-20-4-26" stroke="#6c9fd0" strokeWidth="4" fill="none" />
      <path d="M86 201c0-12 8-20 16-16s8 10 18 16z" fill="#e6eeee" />
      <path d="M78 116c-8 12-16 20-26 26M92 116c4 14 12 22 20 30M60 146c8 2 14 6 20 4" stroke="#b4c8cf" strokeWidth="3" fill="none" />
    </svg>
  );
}

const stats = [
  { label: "Data Type:", value: "Historical" },
  { label: "Data Points:", value: "988" },
  { label: "View Area:", value: "Global" },
];

const blueButton = "bg-[#5296d5] shadow-[0_8px_30px_rgba(82,150,213,0.3)]";
const redButton = "bg-[#d65745] shadow-[0_8px_30px_rgba(214,87,69,0.3)]";

const actions = [
  { label: "Reset View", cls: `w-[265px] ${blueButton}` },
  { label: "Animate", cls: `w-[222px] ${blueButton}` },
  { label: "Show Contours", cls: `w-[328px] ${redButton}` },
  { label: "Show Points", cls: `w-[283px] ${blueButton}` },
];

export default function App() {
  return (
    <div className="h-[1490px] w-full overflow-hidden bg-[#0a0d0a]">
      <div className="relative h-full overflow-hidden rounded-b-[20px] bg-[linear-gradient(135deg,#6c7fe1_0%,#7050a2_100%)] px-[136px] font-['DejaVu_Sans_Condensed','DejaVu_Sans',sans-serif]">
        <header className="flex flex-col items-center pt-[44px] text-white">
          <h1 className="flex h-[100px] items-center gap-[22px] text-[80px] leading-[100px] font-bold tracking-[-0.5px] whitespace-nowrap [text-shadow:4px_4px_8px_rgba(0,0,0,0.3)]">
            <Wave />
            Receding Coastlines
          </h1>
          <p className="mt-[27px] h-[40px] text-[35.2px] leading-[40px] tracking-[-0.5px] whitespace-nowrap opacity-90">
            Interactive visualization of historical and predicted coastline data
          </p>
        </header>

        <section className="mt-[60px] h-[631px] rounded-[30px] bg-white/95 px-[52px] pt-[52px] shadow-[0_16px_64px_rgba(0,0,0,0.1)]">
          <div className="flex h-[56px] items-baseline gap-[13px] text-[38.4px] leading-[56px] font-bold tracking-[0.6px] text-[#303d4f]">
            <span>Year:</span>
            <span className="text-[42.2px] tracking-normal text-[#d65745]">2021</span>
          </div>
          <div className="relative mt-[25px] h-[16px] rounded-full bg-[#dddddd]">
            <div className="absolute top-[-12px] left-[851px] size-[40px] rounded-full bg-[#d65745] shadow-[0_4px_12px_rgba(0,0,0,0.3)]" />
          </div>
          <div className="mt-[36px] flex h-[40px] justify-between text-[28.8px] leading-[40px] tracking-[-0.7px] text-[#666666]">
            <span>1984</span>
            <span>2096</span>
          </div>

          <div className="mt-[46px] grid h-[172px] grid-cols-3 gap-[40px] rounded-[20px] bg-[#f8f9fb] px-[40px] pt-[41px] text-center">
            {stats.map((s) => (
              <div key={s.label}>
                <div className="text-[28.8px] leading-[36px] text-[#666666]">{s.label}</div>
                <div className="mt-[9px] text-[38.4px] leading-[48px] font-bold tracking-[-0.2px] text-[#303d4f]">{s.value}</div>
              </div>
            ))}
          </div>

          <div className="mt-[50px] flex justify-center gap-[30px]">
            {actions.map((a) => (
              <button
                key={a.label}
                className={`h-[86px] rounded-full pt-[2px] font-['Inter',sans-serif] text-[32px] leading-[40px] font-semibold tracking-[-0.5px] whitespace-nowrap text-white ${a.cls}`}
              >
                {a.label}
              </button>
            ))}
          </div>
        </section>

        <section className="relative mt-[40px] h-[1200px] overflow-hidden rounded-[30px] bg-[#333333] p-[4px] shadow-[0_16px_64px_rgba(0,0,0,0.1)]">
          <div className="h-[544px] w-full overflow-hidden">
            <CoastMap />
          </div>
          <div className="absolute top-[24px] left-[24px] flex w-[68px] flex-col rounded-[8px] border-4 border-black/20 bg-clip-padding">
            <button className="flex h-[60px] items-center justify-center rounded-t-[4px] border-b-2 border-[#cccccc] bg-white pt-[17px] pl-[2px] font-['Liberation_Mono',monospace] text-[47px] leading-[40px] font-bold text-black">
              +
            </button>
            <button className="flex h-[60px] items-center justify-center rounded-b-[4px] bg-white pt-[15px] pl-[2px] font-['Liberation_Mono',monospace] text-[47px] leading-[40px] font-bold text-black">
              −
            </button>
          </div>
          <div className="absolute inset-x-[4px] top-[478px] h-[70px] bg-linear-to-b from-transparent to-black/8" />
        </section>

        <div className="pointer-events-none absolute inset-0 rounded-b-[20px] border-x-2 border-b-2 border-white/20" />
        <div className="absolute inset-x-0 top-0 h-px bg-[#35353f]" />
      </div>
    </div>
  );
}
